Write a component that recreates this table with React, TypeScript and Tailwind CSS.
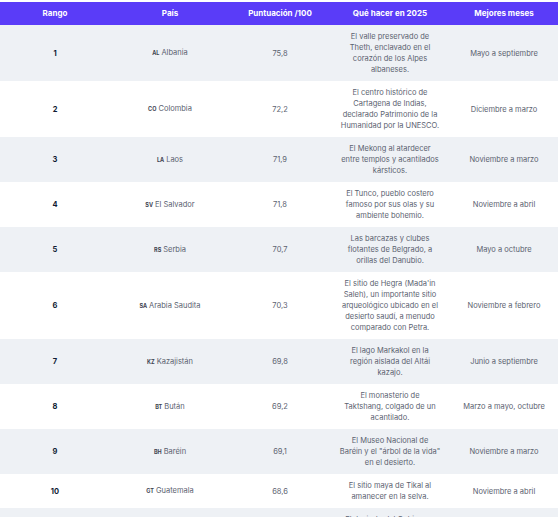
import React from 'react';

interface Destino {
  rank: number;
  code: string;
  country: string;
  score: string;
  what: React.ReactNode;
  months: string;
}

const destinos: Destino[] = [
  { rank: 1, code: 'AL', country: 'Albania', score: '75,8', what: 'El valle preservado de Theth, enclavado en el corazón de los Alpes albaneses.', months: 'Mayo a septiembre' },
  { rank: 2, code: 'CO', country: 'Colombia', score: '72,2', what: 'El centro histórico de Cartagena de Indias, declarado Patrimonio de la Humanidad por la UNESCO.', months: 'Diciembre a marzo' },
  { rank: 3, code: 'LA', country: 'Laos', score: '71,9', what: 'El Mekong al atardecer entre templos y acantilados kársticos.', months: 'Noviembre a marzo' },
  { rank: 4, code: 'SV', country: 'El Salvador', score: '71,8', what: 'El Tunco, pueblo costero famoso por sus olas y su ambiente bohemio.', months: 'Noviembre a abril' },
  { rank: 5, code: 'RS', country: 'Serbia', score: '70,7', what: 'Las barcazas y clubes flotantes de Belgrado, a orillas del Danubio.', months: 'Mayo a octubre' },
  { rank: 6, code: 'SA', country: 'Arabia Saudita', score: '70,3', what: "El sitio de Hegra (Mada'in Saleh), un importante sitio arqueológico ubicado en el desierto saudí, a menudo comparado con Petra.", months: 'Noviembre a febrero' },
  { rank: 7, code: 'KZ', country: 'Kazajistán', score: '69,8', what: 'El lago Markakol en la región aislada del Altái kazajo.', months: 'Junio a septiembre' },
  { rank: 8, code: 'BT', country: 'Bután', score: '69,2', what: <>El monasterio de<br />Taktshang, colgado de un acantilado.</>, months: 'Marzo a mayo, octubre' },
  { rank: 9, code: 'BH', country: 'Baréin', score: '69,1', what: 'El Museo Nacional de Baréin y el "árbol de la vida" en el desierto.', months: 'Noviembre a marzo' },
  { rank: 10, code: 'GT', country: 'Guatemala', score: '68,6', what: 'El sitio maya de Tikal al amanecer en la selva.', months: 'Noviembre a abril' },
  { rank: 11, code: 'MN', country: 'Mongolia', score: '68,4', what: 'El desierto del Gobi y sus dunas cantoras bajo el cielo estrellado.', months: 'Junio a septiembre' },
];

const App: React.FC = () => {
  return (
    <div className="w-[558px] h-[517px] overflow-hidden bg-white pt-[2px] font-['Inter',sans-serif]">
      <table className="w-[558px] table-fixed border-collapse text-center text-[7.5px] leading-[11px]">
        <colgroup>
          <col className="w-[110px]" />
          <col className="w-[120px]" />
          <col className="w-[100px]" />
          <col className="w-[120px]" />
          <col className="w-[108px]" />
        </colgroup>
        <thead>
          <tr className="bg-[#5a3cf8] text-white font-bold text-[8px] h-[23px]">
            <th className="px-1">Rango</th>
            <th className="px-1">País</th>
            <th className="px-1">Puntuación /100</th>
            <th className="px-1">Qué hacer en 2025</th>
            <th className="px-1">Mejores meses</th>
          </tr>
        </thead>
        <tbody>
          {destinos.map((d, i) => (
            <tr key={d.rank} className={i % 2 === 0 ? 'bg-[#eef1f5]' : 'bg-white'}>
              <td className="py-[6px] font-bold text-[#0f1b33]">{d.rank}</td>
              <td className="py-[6px] text-[#5b6270]">
                <span className="text-[5.5px] font-bold text-[#3d4350] mr-[2px]">{d.code}</span>
                {d.country}
              </td>
              <td className="py-[6px] text-[#5b6270]">{d.score}</td>
              <td className="py-[6px] px-[9.5px] text-[#5b6270]">{d.what}</td>
              <td className="py-[6px] px-1 text-[#5b6270]">{d.months}</td>
            </tr>
          ))}
        </tbody>
      </table>
    </div>
  );
};

export default App;
